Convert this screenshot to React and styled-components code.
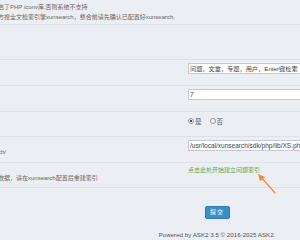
import React from 'react';
import styled, { createGlobalStyle } from 'styled-components';

const GlobalStyle = createGlobalStyle`
    html, body {
        margin: 0;
        padding: 0;
        background: #ebeef3;
        overflow: hidden;
    }
    body {
        font-family: "Liberation Sans", "Noto Sans CJK SC", sans-serif;
        font-size: 6px;
        color: #666;
    }
`

const Page = styled.div`
    position: relative;
    width: 300px;
    height: 240px;
    overflow: hidden;
`

const Row = styled.div`
    display: flex;
    height: ${props => props.h}px;
    border-bottom: 1px solid #dde1e8;
`

const Desc = styled.div`
    width: 190px;
    flex: none;
    margin-left: -2px;
    padding-top: ${props => props.top || 2}px;
    line-height: 10px;
    white-space: nowrap;
    color: #666;
    box-sizing: border-box;
`

const Field = styled.div`
    flex: 1;
    padding-top: ${props => props.top || 3}px;
    min-width: 0;
`

const Input = styled.div`
    box-sizing: border-box;
    height: 11px;
    width: 140px;
    background: #fff;
    border: 1px solid #c6c9cf;
    font-size: ${props => props.size || 6.5}px;
    line-height: 9px;
    padding-left: 1px;
    color: #444;
    white-space: nowrap;
    overflow: hidden;
`

const Radios = styled.div`
    display: flex;
    align-items: center;
    gap: 8px;
    height: 11px;
    color: #555;
    font-size: 6.5px;
`

const Radio = styled.label`
    display: flex;
    align-items: center;
    gap: 1px;
`

const Dot = styled.span`
    width: 4px;
    height: 4px;
    border-radius: 50%;
    border: 0.5px solid #999;
    background: ${props => props.on ? 'radial-gradient(circle, #555 0 1px, #eee 1.3px)' : '#f2f2f2'};
`

const GreenLink = styled.a`
    display: block;
    line-height: 10px;
    color: #5aa845;
    text-decoration: none;
`

const Bottom = styled.div`
    display: flex;
    flex-direction: column;
    align-items: center;
    padding-left: 134px;
    padding-top: 18px;
`

const Submit = styled.button`
    width: 25px;
    height: 13px;
    padding: 0;
    background: #3a8ec8;
    border: 1px solid #2f7db3;
    border-radius: 2px;
    color: #fff;
    font-family: inherit;
    font-size: 6px;
    letter-spacing: 1px;
    line-height: 11px;
`

const Footer = styled.div`
    margin-top: 11px;
    line-height: 10px;
    font-size: 6.2px;
    color: #555;
    white-space: nowrap;
`

const Arrow = styled.svg`
    position: absolute;
    left: 254px;
    top: 170px;
`

export default function App() {
    return (
        <Page>
            <GlobalStyle />
            <Row h={24}>
                <Desc>
                    启了PHP iconv库,否则系统不支持<br />
                    方搜全文检索引擎xunsearch，整合前请先确认已配置好xunsearch.
                </Desc>
            </Row>
            <Row h={34} />
            <Row h={25}>
                <Desc />
                <Field><Input size={6.2}>问题，文章，专题，用户，Enter键检索</Input></Field>
            </Row>
            <Row h={25}>
                <Desc />
                <Field><Input>7</Input></Field>
            </Row>
            <Row h={24}>
                <Desc />
                <Field>
                    <Radios>
                        <Radio><Dot on />是</Radio>
                        <Radio><Dot />否</Radio>
                    </Radios>
                </Field>
            </Row>
            <Row h={25}>
                <Desc top={10}>ch/</Desc>
                <Field><Input>/usr/local/xunsearch/sdk/php/lib/XS.php</Input></Field>
            </Row>
            <Row h={24}>
                <Desc top={10}>数据，请在xunsearch配置后重建索引</Desc>
                <Field top={2}><GreenLink>点击此处开始建立问题索引</GreenLink></Field>
            </Row>
            <Bottom>
                <Submit>提交</Submit>
                <Footer>Powered by ASK2 3.5 © 2016-2025 ASK2.</Footer>
            </Bottom>
            <Arrow width="24" height="26" viewBox="0 0 24 26">
                <line x1="21" y1="23" x2="7" y2="7" stroke="#f08a30" strokeWidth="1.2" strokeLinecap="round" />
                <polygon points="4,4 11,7 6,11" fill="#f08a30" />
            </Arrow>
        </Page>
    );
}
